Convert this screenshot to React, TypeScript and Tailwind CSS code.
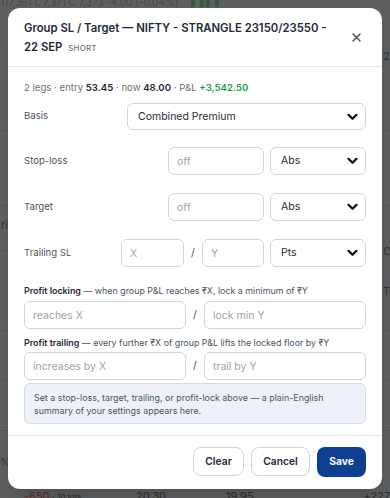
import React from "react";

const Chevron = () => (
  <svg width="11" height="7" viewBox="0 0 11 7" className="pointer-events-none absolute right-[7px] top-1/2 -translate-y-1/2">
    <path d="M1.5 1.3 L5.5 5.3 L9.5 1.3" fill="none" stroke="#111" strokeWidth="2.3" strokeLinecap="round" strokeLinejoin="round" />
  </svg>
);

function Select({ value, className }: { value: string; className: string }) {
  return (
    <div className={"relative flex items-center rounded-md border border-[#d1d5db] bg-white pl-[10px] text-[10.5px] text-[#1f2937] " + className}>
      {value}
      <Chevron />
    </div>
  );
}

function Input({ ph, className }: { ph: string; className: string }) {
  return (
    <input
      placeholder={ph}
      className={"rounded-md border border-[#d1d5db] bg-white px-[8px] text-[10.5px] text-[#1f2937] placeholder:text-[#9ca3af] outline-none " + className}
    />
  );
}

const Slash = () => <span className="w-[18px] text-center text-[10.5px] text-[#4b5563]">/</span>;

export default function App() {
  return (
    <div className="relative h-[498px] w-[390px] overflow-hidden bg-[#5e5f60]" style={{ fontFamily: "Inter, 'Noto Sans', sans-serif" }}>
      {/* dimmed background page */}
      <div className="absolute left-0 top-[-5px] flex gap-3 whitespace-nowrap text-[10px] text-[#3f4a44]">
        <span>117,361 L 7,371 C 7,373 -4.00 (-0.04%)</span>
        <span className="text-[#2f5a3c]">▮ ▮▮ ▮</span>
      </div>
      <div className="absolute left-0 top-[130px] h-px w-full bg-[#555657]" />
      <div className="absolute left-0 top-[205px] h-px w-full bg-[#555657]" />
      <div className="absolute left-0 top-[250px] h-px w-full bg-[#555657]" />
      <div className="absolute left-0 top-[330px] h-px w-full bg-[#555657]" />
      <div className="absolute left-0 top-[380px] h-px w-full bg-[#555657]" />
      <div className="absolute left-0 top-[430px] h-px w-full bg-[#555657]" />
      <span className="absolute left-[1px] top-[217px] text-[11px] text-[#333]">ri</span>
      <span className="absolute left-[0px] top-[455px] text-[10px] text-[#333]">%</span>
      <span className="absolute left-[383px] top-[48px] text-[11px] text-[#333]">21</span>
      <span className="absolute left-[383px] top-[243px] text-[11px] text-[#333]">C</span>
      <span className="absolute left-[383px] top-[283px] text-[11px] text-[#333]">T</span>
      <div className="absolute left-[24px] top-[488px] flex whitespace-nowrap text-[11px] text-[#2e2e2e]">
        <span className="w-[60px]"><span className="text-[#6a2a2a]">-650</span> <span className="text-[8px]">· 10 lots</span></span>
        <span className="ml-[52px]">20.30</span>
        <span className="ml-[60px]">19.95</span>
        <span className="ml-[110px]">+227.50</span>
        <span className="ml-[16px]">14.9L <span className="text-[9px]">(+0</span></span>
      </div>

      {/* modal */}
      <div className="absolute left-[8px] top-[8px] flex h-[481px] w-[374px] flex-col rounded-[12px] bg-white shadow-xl">
        <div className="flex items-start border-b border-[#e5e7eb] px-4 pb-[8px] pt-[11px]">
          <div className="flex-1 pr-[10px] text-[11.3px] font-semibold leading-[19px] text-[#1f2937]">
            Group SL / Target — NIFTY - STRANGLE 23150/23550 - 22 SEP{" "}
            <span className="ml-[3px] text-[7.8px] font-medium tracking-[0.3px] text-[#6b7280]">SHORT</span>
          </div>
          <button className="mr-[5px] mt-[14px]">
            <svg width="9" height="9" viewBox="0 0 9 9">
              <path d="M1 1 L8 8 M8 1 L1 8" stroke="#4b5563" strokeWidth="1.5" strokeLinecap="round" />
            </svg>
          </button>
        </div>

        <div className="flex flex-col px-4 pt-[14px]">
          <div className="text-[9.6px] leading-[14px] text-[#6b7280]">
            2 legs · entry <span className="font-semibold text-[#1f2937]">53.45</span> · now{" "}
            <span className="font-semibold text-[#1f2937]">48.00</span> · P&amp;L{" "}
            <span className="font-semibold text-[#16a34a]">+3,542.50</span>
          </div>

          <div className="mt-[8px] flex items-center">
            <span className="flex-1 text-[9.6px] text-[#4b5563]">Basis</span>
            <Select value="Combined Premium" className="h-[27px] w-[239px]" />
          </div>

          <div className="mt-[17px] flex items-center gap-[6px]">
            <span className="flex-1 text-[9.6px] text-[#4b5563]">Stop-loss</span>
            <Input ph="off" className="h-[28px] w-[96px]" />
            <Select value="Abs" className="h-[28px] w-[96px]" />
          </div>

          <div className="mt-[18px] flex items-center gap-[6px]">
            <span className="flex-1 text-[9.6px] text-[#4b5563]">Target</span>
            <Input ph="off" className="h-[28px] w-[96px]" />
            <Select value="Abs" className="h-[28px] w-[96px]" />
          </div>

          <div className="mt-[18px] flex items-center">
            <span className="flex-1 text-[9.6px] text-[#4b5563]">Trailing SL</span>
            <Input ph="X" className="h-[28px] w-[63px]" />
            <Slash />
            <Input ph="Y" className="h-[28px] w-[62px]" />
            <Select value="Pts" className="ml-[6px] h-[28px] w-[96px]" />
          </div>

          <div className="mt-[17px] text-[8.9px] leading-[13px] text-[#4b5563]">
            <span className="font-semibold text-[#1f2937]">Profit locking</span> — when group P&amp;L reaches ₹X, lock a minimum of ₹Y
          </div>
          <div className="mt-[4px] flex items-center">
            <Input ph="reaches X" className="h-[28px] min-w-0 flex-1" />
            <Slash />
            <Input ph="lock min Y" className="h-[28px] min-w-0 flex-1" />
          </div>

          <div className="mt-[7px] text-[8.9px] leading-[13px] text-[#4b5563]">
            <span className="font-semibold text-[#1f2937]">Profit trailing</span> — every further ₹X of group P&amp;L lifts the locked floor by ₹Y
          </div>
          <div className="mt-[3px] flex items-center">
            <Input ph="increases by X" className="h-[28px] min-w-0 flex-1" />
            <Slash />
            <Input ph="trail by Y" className="h-[28px] min-w-0 flex-1" />
          </div>

          <div className="mt-[3px] rounded-md border border-[#d5dbe4] bg-[#eef2f8] px-[9px] pb-[6px] pt-[7px] text-[8.9px] leading-[13px] text-[#4b5563]">
            Set a stop-loss, target, trailing, or profit-lock above — a plain-English summary of your settings appears here.
          </div>
        </div>

        <div className="mt-[11px] flex justify-end gap-[7px] border-t border-[#e5e7eb] px-4 pt-[11px]">
          <button className="h-[29px] w-[51px] rounded-lg border border-[#d1d5db] bg-white text-[10.3px] font-semibold text-[#1f2937]">Clear</button>
          <button className="h-[29px] w-[59px] rounded-lg border border-[#d1d5db] bg-white text-[10.3px] font-semibold text-[#1f2937]">Cancel</button>
          <button className="h-[30px] w-[49px] rounded-lg bg-[#0c3f8f] text-[10.3px] font-bold text-white">Save</button>
        </div>
      </div>
    </div>
  );
}
